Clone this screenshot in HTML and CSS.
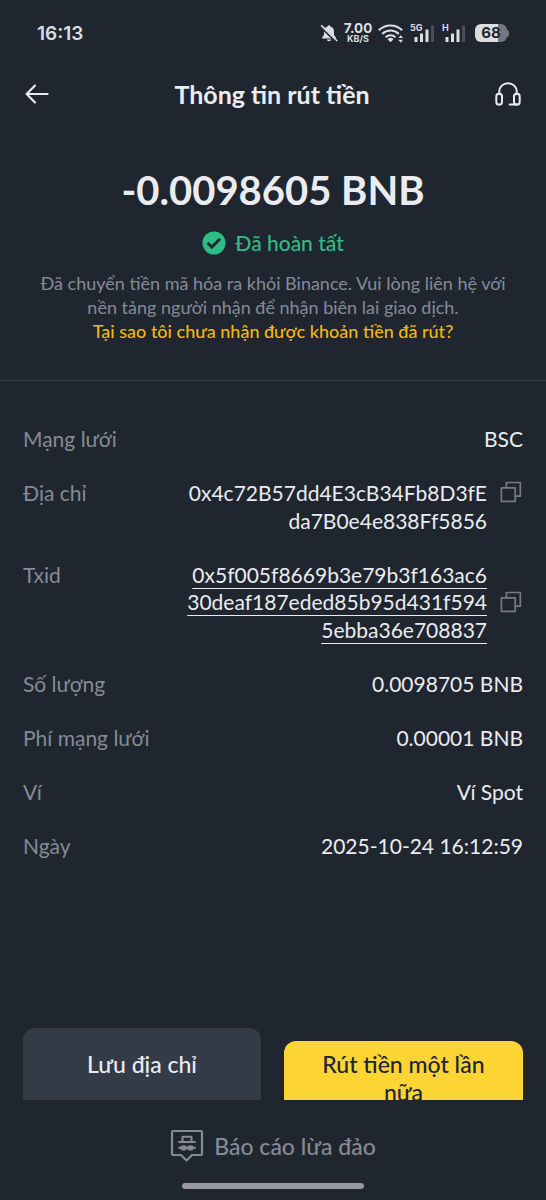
FILE: index.html
```
<!DOCTYPE html>
<html lang="vi">
<head>
<meta charset="utf-8">
<title>Thông tin rút tiền</title>
<link rel="stylesheet" href="styles.css">
</head>
<body>
<div class="screen">
  <div class="statusbar">
    <span class="clock">16:13</span>
    <div class="indicators">
      <svg class="ind-bell" width="20" height="20" viewBox="0 0 20 20"><path d="M10 2.2c-.9 0-1.5.6-1.5 1.4C6.300 4.300 5 6 5 8.300v3.500L3 14.700v.8h14v-.8l-2-2.900V8.300c0-2.300-1.300-4-3.500-4.700 0-.8-.6-1.400-1.500-1.400zM7.900 16.600h4.200c-.2 1-1 1.700-2.100 1.700s-1.900-.7-2.100-1.700z" fill="#dcdde0"/><path d="M1.200 3.300 16.600 18.700" stroke="#202630" stroke-width="1.800"/><path d="M2.200 2.300 18.200 18" stroke="#dcdde0" stroke-width="1.700"/></svg>
      <div class="speed"><span class="speed-num">7.00</span><span class="speed-unit">KB/S</span></div>
      <svg class="ind-wifi" width="26" height="20" viewBox="0 0 26 20"><g fill="none" stroke="#dcdde0" stroke-width="2.100"><path d="M.8 7.300a16.500 16.500 0 0 1 23.400 0"/><path d="M4.200 10.900a12 12 0 0 1 16.600 0"/><path d="M7.500 14.200a7.500 7.500 0 0 1 10 0"/></g><path d="M9.500 16.200a4.500 4.500 0 0 1 6 0l-3 3z" fill="#dcdde0"/><path d="m20.300 15.100 2.400-2.900 2.400 2.900zm0 1.700h4.800l-2.400 2.900z" fill="#dcdde0"/></svg>
      <div class="signal"><span class="net">5G</span><svg width="25" height="20" viewBox="0 0 25 20"><path d="M4.500 14h3v5h-3zM10 10.500h3V19h-3zM15.500 6.500h3V19h-3z" fill="#dcdde0"/><path d="M21 2.500h3V19h-3z" fill="#48505a"/></svg></div>
      <div class="signal signal-h"><span class="net">H</span><svg width="25" height="20" viewBox="0 0 25 20"><path d="M3.500 14h3v5h-3zM9 10.500h3V19H9zM14.500 6.500h3V19h-3z" fill="#dcdde0"/><path d="M20 2.500h3V19h-3z" fill="#48505a"/></svg></div>
      <div class="battery"><span class="battery-body">68</span><span class="battery-cap"></span></div>
    </div>
  </div>

  <div class="header">
    <svg width="24" height="22" viewBox="0 0 24 22" fill="none" stroke="#eaecef" stroke-width="2.100" stroke-linecap="round" stroke-linejoin="round"><path d="M22.600 11H1.600M10 2.600 1.600 11l8.400 8.400"/></svg>
    <h1 class="title">Thông tin rút tiền</h1>
    <svg width="26" height="26" viewBox="0 0 26 26" fill="none" stroke="#eaecef" stroke-width="2" stroke-linejoin="round" stroke-linecap="round"><path d="M4.300 13V10.500C4.300 5.800 8 2.300 13 2.300s8.700 3.500 8.700 8.200V13"/><rect x="1.300" y="12.800" width="5.700" height="10.700" rx="2.600"/><rect x="19" y="12.800" width="5.700" height="10.700" rx="2.600"/><path d="M21.800 23.500h-7.100"/></svg>
  </div>

  <div class="summary">
    <div class="amount">-0.0098605 BNB</div>
    <div class="state">
      <svg width="24" height="24" viewBox="0 0 24 24"><circle cx="12" cy="12" r="11.500" fill="#2ebd85"/><path d="m5.600 11.800 4.200 4.300 8.400-8.300" fill="none" stroke="#202630" stroke-width="2.900"/></svg>
      <span class="state-text">Đã hoàn tất</span>
    </div>
    <div class="note"><span class="note-a">Đã chuyển tiền mã hóa ra khỏi Binance. Vui lòng liên hệ với</span><span class="note-b">nền tảng người nhận để nhận biên lai giao dịch.</span></div>
    <a class="help">Tại sao tôi chưa nhận được khoản tiền đã rút?</a>
  </div>

  <div class="details">
    <div class="row"><span class="label">Mạng lưới</span><span class="value">BSC</span></div>
    <div class="row"><span class="label">Địa chỉ</span><div class="copyable first-line"><span class="value hash">0x4c72B57dd4E3cB34Fb8D3fE<br>da7B0e4e838Ff5856</span><svg width="22" height="22" viewBox="0 0 22 22" fill="none" stroke="#747a86" stroke-width="1.700" stroke-linejoin="round"><path d="M1.400 6.800h13.800v13.600H1.400zM6.400 6.600V1.500h13.900v13.700h-4.900"/></svg></div></div>
    <div class="row"><span class="label">Txid</span><div class="copyable"><span class="value hash link">0x5f005f8669b3e79b3f163ac6<br>30deaf187eded85b95d431f594<br>5ebba36e708837</span><svg width="22" height="22" viewBox="0 0 22 22" fill="none" stroke="#747a86" stroke-width="1.700" stroke-linejoin="round"><path d="M1.400 6.800h13.800v13.600H1.400zM6.400 6.600V1.500h13.900v13.700h-4.900"/></svg></div></div>
    <div class="row"><span class="label">Số lượng</span><span class="value">0.0098705 BNB</span></div>
    <div class="row"><span class="label">Phí mạng lưới</span><span class="value">0.00001 BNB</span></div>
    <div class="row"><span class="label">Ví</span><span class="value">Ví Spot</span></div>
    <div class="row"><span class="label">Ngày</span><span class="value">2025-10-24 16:12:59</span></div>
  </div>

  <div class="actions">
    <div class="btn btn-secondary">Lưu địa chỉ</div>
    <div class="btn btn-primary">Rút tiền một lần<br>nữa</div>
  </div>

  <div class="report">
    <svg width="34" height="34" viewBox="0 0 34 34" fill="none" stroke="#858b96" stroke-width="2.200" stroke-linejoin="round" stroke-linecap="round"><path d="M3 2h28c.6 0 1 .4 1 1v22c0 .6-.4 1-1 1h-9l-5.500 5.500L11 26H3c-.6 0-1-.4-1-1V3c0-.6.4-1 1-1z"/><path d="M9 13h16M12.500 12.500V7.800h9v4.700M9 18.700h16" stroke-width="2"/><ellipse cx="13.500" cy="18.900" rx="2.500" ry="1.800" fill="#858b96" stroke-width="1.500"/><ellipse cx="20.500" cy="18.900" rx="2.500" ry="1.800" fill="#858b96" stroke-width="1.500"/></svg>
    <span class="report-text">Báo cáo lừa đảo</span>
  </div>
  <div class="homebar"></div>
</div>
</body>
</html>
```
FILE: styles.css
```
* { box-sizing: border-box; }
body {
  margin: 0;
  background: #202630;
  color: #eaecef;
  font-family: Lato, "Noto Sans", sans-serif;
}
svg { display: block; flex: none; }
.screen {
  width: 546px;
  height: 1200px;
  overflow: hidden;
  display: flex;
  flex-direction: column;
  background: #202630;
}

.statusbar {
  height: 66px;
  padding: 0 37px;
  display: flex;
  align-items: center;
  justify-content: space-between;
  font-family: Inter, sans-serif;
  color: #dcdde0;
}
.clock { font-size: 19px; font-weight: 600; }
.indicators { display: flex; align-items: center; }
.speed {
  width: 30px;
  margin: 0 5px 0 4px;
  display: flex;
  flex-direction: column;
  align-items: center;
  font-weight: 700;
}
.speed-num { font-size: 13.500px; line-height: 11px; }
.speed-unit { font-size: 9px; line-height: 9px; }
.signal { position: relative; margin-left: 6px; }
.signal-h { margin-left: 7px; }
.net { position: absolute; left: 0; top: 0; font-size: 9px; line-height: 9px; font-weight: 700; }
.battery { display: flex; align-items: center; margin-left: 8px; }
.battery-body {
  width: 32px;
  height: 18px;
  border-radius: 6px;
  background: linear-gradient(90deg, #dcdde0 72%, #727780 72%);
  color: #202630;
  font-size: 15px;
  line-height: 18px;
  font-weight: 700;
  text-align: center;
}
.battery-cap { width: 2px; height: 7px; background: #727780; border-radius: 0 2px 2px 0; }

.header {
  height: 56px;
  padding: 0 25px;
  display: flex;
  align-items: center;
  justify-content: space-between;
}
.title { margin: 0; font-size: 25px; line-height: 32px; font-weight: 700; }

.summary {
  height: 259px;
  padding-top: 43px;
  border-bottom: 1px solid #333b47;
  display: flex;
  flex-direction: column;
  align-items: center;
}
.amount { font-size: 40px; line-height: 50px; font-weight: 700; white-space: nowrap; }
.state { height: 30px; margin-top: 13px; display: flex; align-items: center; gap: 9px; }
.state-text { font-size: 21px; line-height: 30px; color: #2ebd85; font-weight: 500; }
.note {
  margin-top: 13px;
  display: flex;
  flex-direction: column;
  align-items: center;
  color: #858b96;
  font-size: 18px;
  line-height: 24px;
  white-space: nowrap;
}
.help { color: #f0b90b; font-size: 18px; line-height: 25px; font-weight: 500; white-space: nowrap; }

.details {
  height: 647px;
  padding: 44px 23px 0;
  display: flex;
  flex-direction: column;
  gap: 26.500px;
  font-size: 21px;
  line-height: 27.500px;
}
.row { display: flex; justify-content: space-between; align-items: flex-start; }
.label { color: #858b96; }
.value { text-align: right; white-space: nowrap; }
.copyable { display: flex; align-items: center; gap: 13px; }
.copyable svg { margin-right: 1px; }
.first-line { align-items: flex-start; }
.first-line svg { margin-top: 2px; }
.link { text-decoration: underline; text-decoration-thickness: 1px; text-underline-offset: 5px; text-decoration-skip-ink: none; }

.actions {
  height: 72px;
  padding: 0 23px;
  display: grid;
  grid-template-columns: 238px 239px;
  gap: 23px;
  overflow: hidden;
}
.btn { border-radius: 12px; text-align: center; font-weight: 500; font-size: 23px; }
.btn-secondary { background: #333b47; line-height: 72px; }
.btn-primary { background: #fcd535; color: #202630; height: 72px; margin-top: 13px; padding-top: 9px; line-height: 28px; white-space: nowrap; }

.report {
  height: 82px;
  padding-top: 10px;
  display: flex;
  justify-content: center;
  align-items: center;
  gap: 10px;
  color: #858b96;
}
.report-text { font-size: 23px; line-height: 32px; font-weight: 500; }
.homebar { width: 182px; height: 6px; margin: 1px auto 0; border-radius: 3px; background: #96989d; flex: none; }
```
